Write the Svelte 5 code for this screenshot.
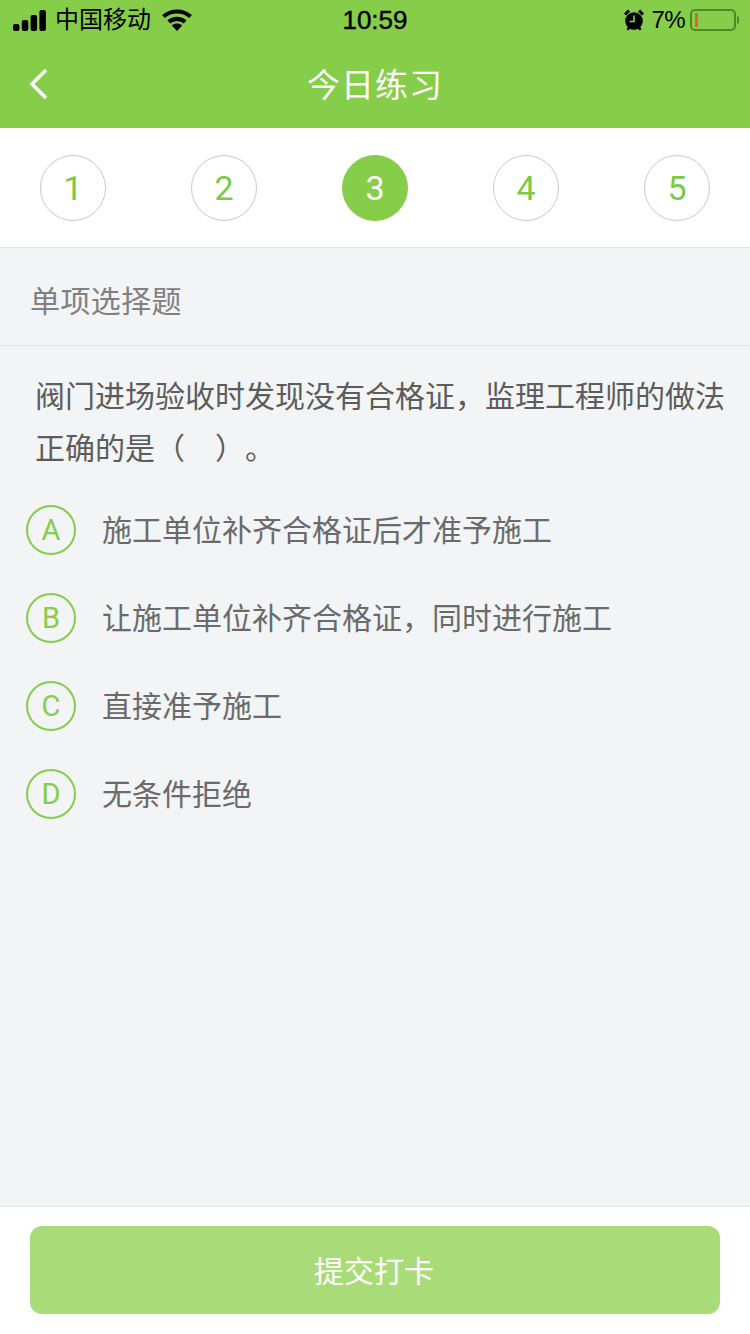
<script>
  const steps = [1, 2, 3, 4, 5];
  const current = 3;
  const options = [
    { key: 'A', text: '施工单位补齐合格证后才准予施工' },
    { key: 'B', text: '让施工单位补齐合格证，同时进行施工' },
    { key: 'C', text: '直接准予施工' },
    { key: 'D', text: '无条件拒绝' }
  ];
</script>

<div class="page">
  <header class="top">
    <div class="status">
      <div class="status-left">
        <svg class="signal" width="33" height="21" viewBox="0 0 33 21" fill="#000">
          <rect x="0" y="14" width="6.500" height="7" rx="2" />
          <rect x="8.800" y="10" width="6.500" height="11" rx="2" />
          <rect x="17.600" y="5" width="6.500" height="16" rx="2" />
          <rect x="26.400" y="0" width="6.500" height="21" rx="2" />
        </svg>
        <span class="carrier">中国移动</span>
        <svg class="wifi" width="30" height="22" viewBox="0 0 30 22" fill="none" stroke="#000" stroke-width="4.200">
          <path d="M1.500 7.500C9 .8 21 .8 28.500 7.500" />
          <path d="M6.800 12.800C11.500 8.800 18.500 8.800 23.200 12.800" />
          <path d="M15 22L9.800 16.400C13 14 17 14 20.200 16.400Z" fill="#000" stroke="none" />
        </svg>
      </div>
      <span class="time">10:59</span>
      <div class="status-right">
        <svg class="alarm" width="20" height="22" viewBox="0 0 20 22">
          <circle cx="10" cy="12" r="8.800" fill="#000" />
          <path d="M10 6.500V12.500H5.500" fill="none" stroke="#86cd4a" stroke-width="1.600" />
          <path d="M1 5.500L5 1.500M19 5.500L15 1.500" stroke="#000" stroke-width="3" />
          <path d="M3.500 20.800L5 18.500M16.500 20.800L15 18.500" stroke="#000" stroke-width="2.400" />
        </svg>
        <span class="percent">7%</span>
        <div class="battery"><i class="level"></i></div>
        <i class="battery-cap"></i>
      </div>
    </div>
    <nav class="nav">
      <svg class="back" width="20" height="32" viewBox="0 0 20 32" fill="none" stroke="#fff" stroke-width="3.600">
        <path d="M17 2L3 16L17 30" />
      </svg>
      <h1>今日练习</h1>
    </nav>
  </header>

  <div class="steps">
    {#each steps as step}
      <div class="step" class:active={step === current}>{step}</div>
    {/each}
  </div>

  <main class="body">
    <div class="kind">单项选择题</div>
    <p class="question">阀门进场验收时发现没有合格证，监理工程师的做法正确的是（　）。</p>
    <ul class="options">
      {#each options as option}
        <li class="option">
          <span class="letter">{option.key}</span>
          <span class="label">{option.text}</span>
        </li>
      {/each}
    </ul>
  </main>

  <footer class="footer">
    <button class="submit">提交打卡</button>
  </footer>
</div>

<style>
  :global(body) {
    margin: 0;
  }

  .page {
    display: flex;
    flex-direction: column;
    width: 750px;
    height: 1334px;
    overflow: hidden;
    background: #f2f4f6;
    font-family: "Liberation Sans", "Noto Sans CJK SC", sans-serif;
    text-spacing-trim: space-all;
  }

  .top {
    height: 128px;
    background: #86cd4a;
  }

  .status {
    position: relative;
    display: flex;
    align-items: center;
    justify-content: space-between;
    height: 40px;
    padding: 0 11px 0 13px;
    color: #000;
  }

  .status-left,
  .status-right {
    display: flex;
    align-items: center;
  }

  .signal {
    margin-right: 9px;
  }

  .carrier {
    font-size: 24px;
    line-height: 40px;
  }

  .wifi {
    margin-left: 11px;
  }

  .time {
    position: absolute;
    left: 0;
    right: 0;
    text-align: center;
    font-size: 26px;
    font-weight: 500;
    line-height: 40px;
    -webkit-text-stroke: 0.4px #000;
  }

  .percent {
    margin-left: 8px;
    margin-right: 5px;
    font-size: 24px;
    letter-spacing: -0.600px;
    line-height: 40px;
  }

  .battery {
    box-sizing: border-box;
    display: flex;
    align-items: center;
    width: 46px;
    height: 22px;
    padding: 0 3px;
    border: 2px solid #4f8a2a;
    border-radius: 5px;
  }

  .level {
    width: 3px;
    height: 14px;
    background: #e0662e;
  }

  .battery-cap {
    width: 2px;
    height: 8px;
    margin-left: 1px;
    border-radius: 0 2px 2px 0;
    background: #4f8a2a;
  }

  .nav {
    position: relative;
    display: flex;
    align-items: center;
    justify-content: center;
    height: 88px;
  }

  .back {
    position: absolute;
    left: 29px;
    top: 28px;
  }

  h1 {
    margin: 3px 0 0;
    color: #fff;
    font-size: 33px;
    font-weight: 400;
    letter-spacing: 1px;
    line-height: 85px;
  }

  .steps {
    display: flex;
    align-items: center;
    justify-content: space-between;
    height: 120px;
    box-sizing: border-box;
    padding: 0 40px;
    border-bottom: 1px solid #e4e5e7;
    background: #fff;
  }

  .step {
    box-sizing: border-box;
    display: flex;
    align-items: center;
    justify-content: center;
    width: 66px;
    height: 66px;
    margin-top: 1px;
    border: 1px solid #c9c9c9;
    border-radius: 50%;
    color: #7cc848;
    font-family: Roboto, "Liberation Sans", sans-serif;
    font-size: 34px;
  }

  .step.active {
    border-color: #86cd4a;
    background: #86cd4a;
    color: #fff;
  }

  .body {
    flex: 1;
  }

  .kind {
    box-sizing: border-box;
    height: 98px;
    padding-left: 30px;
    border-bottom: 1px solid #e4e5e7;
    color: #808080;
    font-size: 30px;
    letter-spacing: 0.400px;
    line-height: 107px;
  }

  .question {
    margin: 25px 25px 0 35px;
    color: #5c5c5c;
    font-size: 30px;
    line-height: 52px;
  }

  .options {
    margin: 11px 0 0;
    padding: 0;
    list-style: none;
  }

  .option {
    display: flex;
    align-items: center;
    height: 88px;
    padding-left: 26px;
  }

  .letter {
    box-sizing: border-box;
    display: flex;
    align-items: center;
    justify-content: center;
    width: 50px;
    height: 50px;
    border: 2px solid #86cd4a;
    border-radius: 50%;
    color: #86cd4a;
    font-family: Roboto, "Liberation Sans", sans-serif;
    font-size: 29px;
  }

  .label {
    margin-left: 26px;
    margin-bottom: 4px;
    color: #6a6a6a;
    font-size: 30px;
  }

  .footer {
    box-sizing: border-box;
    height: 128px;
    padding: 19px 30px 0;
    border-top: 1px solid #e6e7ea;
    background: #fff;
  }

  .submit {
    display: block;
    width: 690px;
    height: 88px;
    padding: 0 2px 2px 0;
    border: 0;
    border-radius: 12px;
    background: #a9dc78;
    color: #fff;
    font-family: inherit;
    font-size: 30px;
  }
</style>
